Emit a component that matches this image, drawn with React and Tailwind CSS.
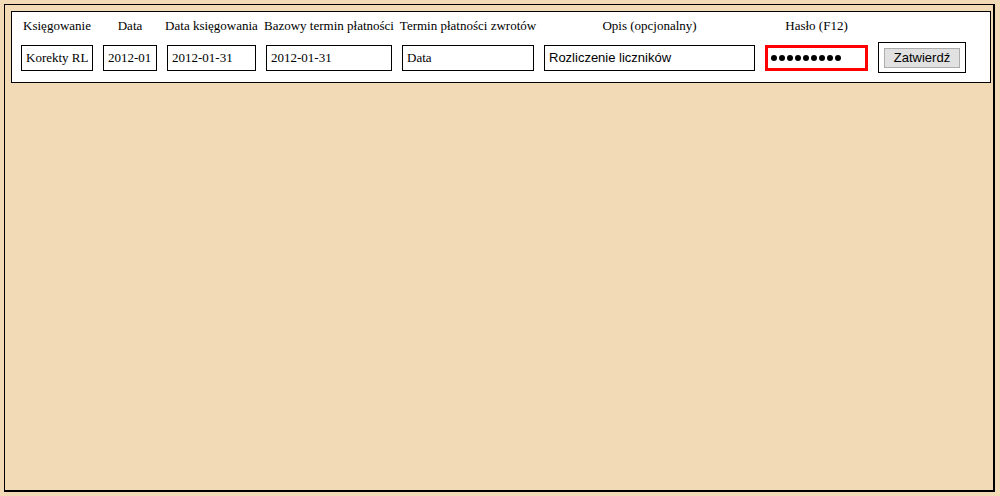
// App.jsx - posting form (Księgowanie) on a wheat background

const serif = { fontFamily: '"Liberation Serif", "Times New Roman", serif' };
const sans = { fontFamily: '"Liberation Sans", Arial, sans-serif' };

// column labels, in grid order (last column has no label)
const labels = [
  'Księgowanie',
  'Data',
  'Data księgowania',
  'Bazowy termin płatności',
  'Termin płatności zwrotów',
  'Opis (opcjonalny)',
  'Hasło (F12)',
  '',
];

function TextBox({ value, font = serif }) {
  return (
    <input
      type="text"
      defaultValue={value}
      style={font}
      className="w-full h-[26px] border border-black bg-white px-[4px] text-[13px] text-black outline-none"
    />
  );
}

export default function App() {
  return (
    <div className="w-[1000px] h-[496px] bg-[#f3dab6] pt-[4px] pl-[4px]" style={serif}>
      <div className="w-[991px] h-[488px] border-l border-t border-r-2 border-b-2 border-black pt-[6px] pl-[6px]">
        {/* Form panel */}
        <div className="w-[980px] bg-white border border-black pt-[6px] pb-[9px] pl-[9px]">
          <div className="grid grid-cols-[72px_54px_89px_126px_132px_211px_103px_88px] grid-rows-[16px_31px] gap-x-[10px] gap-y-[8px] items-center">
            {labels.map((label, i) => (
              <div key={i} className="flex justify-center whitespace-nowrap text-[13px] leading-[16px] text-black">
                {label}
              </div>
            ))}

            <TextBox value="Korekty RL" />
            <TextBox value="2012-01" />
            <TextBox value="2012-01-31" />
            <TextBox value="2012-01-31" />
            <TextBox value="Data" />
            <TextBox value="Rozliczenie liczników" font={sans} />

            {/* Password field (masked) */}
            <div className="h-[26px] border-[3px] border-[#ff0000] bg-white flex items-center pl-[3px] gap-[2px]">
              {Array.from({ length: 9 }).map((_, i) => (
                <span key={i} className="w-[6px] h-[6px] rounded-full bg-black" />
              ))}
            </div>

            {/* Submit */}
            <div className="h-[31px] border border-black flex items-center justify-center">
              <button
                type="button"
                style={sans}
                className="w-[76px] h-[20px] bg-[#e1e1e1] border border-[#adadad] text-[13px] leading-none text-black"
              >
                Zatwierdź
              </button>
            </div>
          </div>
        </div>
      </div>
    </div>
  );
}
